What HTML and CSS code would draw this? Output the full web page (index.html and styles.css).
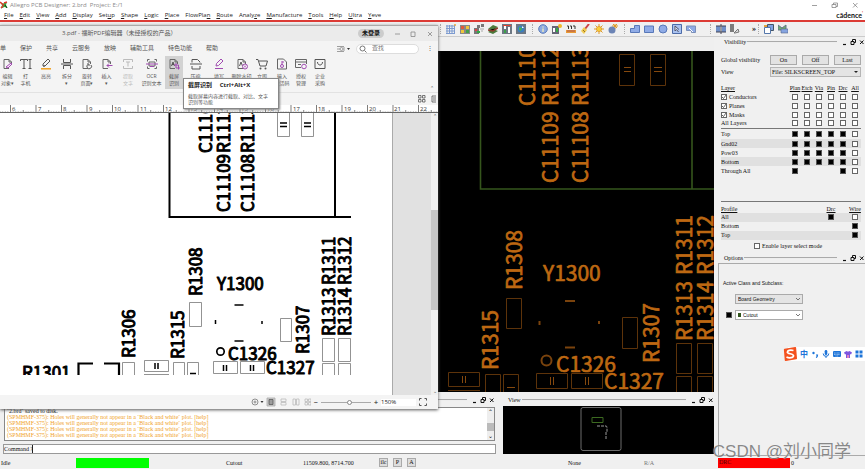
FILE: index.html
```html
<!DOCTYPE html>
<html lang="zh-CN">
<head>
<meta charset="utf-8">
<title>Allegro PCB Designer</title>
<link rel="stylesheet" href="styles.css">
</head>
<body>
<svg class="defs" aria-hidden="true">
  <symbol id="dock-icons" viewBox="0 0 24 8"><path d="M2 6.500h3" stroke="#111" stroke-width="1.200"/><path d="M11.500 3V1.500h3V4.500H13M10 3.500h3v3h-3z" fill="none" stroke="#111"/><path d="M19 2.500l3.500 3.500M22.500 2.500l-3.500 3.500" stroke="#111"/></symbol>
  <symbol id="doc" viewBox="0 0 12 12"><path d="M7 10.500H2v-9h5l2.500 2.500v2M7 1.500V4h2.500" fill="none" stroke="#666"/></symbol>
</svg>
<div class="app">
  <header class="app-head">
    <div class="app-title">
      <svg width="8" height="8" viewBox="0 0 8 8"><path d="M0 1l3 1.500L7 1 6 4l1.500 3-3-1L1 7.500 2 4z" fill="#2fae3c"/><path d="M0 1l4 3.500M4 2l3-1M1 7l2-2" stroke="#e0352b" stroke-width="1.500"/><path d="M5 4l2 3" stroke="#133b17"/></svg>
      <span>Allegro PCB Designer: 2.brd&nbsp; Project: E:/1</span>
      <svg class="win-controls" width="50" height="8" viewBox="0 0 50 8" fill="none" stroke="#777" stroke-width=".7"><path d="M1 4.500h5M22.500 3.500v-1.500h4v3.500h-1.500M21 3.500h4v3h-4zM42 2l4.500 4.500M46.500 2L42 6.500"/></svg>
    </div>
    <nav class="menu">
      <a href="#"><u>F</u>ile</a><a href="#"><u>E</u>dit</a><a href="#"><u>V</u>iew</a><a href="#"><u>A</u>dd</a><a href="#"><u>D</u>isplay</a><a href="#">Set<u>u</u>p</a><a href="#"><u>S</u>hape</a><a href="#"><u>L</u>ogic</a><a href="#"><u>P</u>lace</a><a href="#">FlowPla<u>n</u></a><a href="#"><u>R</u>oute</a><a href="#">Analy<u>z</u>e</a><a href="#"><u>M</u>anufacture</a><a href="#"><u>T</u>ools</a><a href="#"><u>H</u>elp</a><a href="#"><u>U</u>ltra</a><a href="#"><u>Y</u>eve</a>
      <strong class="brand">cādence<sup>'</sup></strong>
    </nav>
  </header>

  <div class="toolbar">
    <div class="group">
      <svg viewBox="0 0 10 10"><path d="M0 2h9M0 4.500h9M0 7h9M0 9.500h9M1 1v9M3.500 1v9M6 1v9M8.500 1v9" stroke="#7d9bd0"/><circle cx="9" cy="1" r="1" fill="#e9a13c"/></svg>
      <svg viewBox="0 0 10 10"><path fill="#888" d="M0 1h10v9H0z"/><path fill="#e05a3c" d="M1 2h3v3H1z"/><path fill="#f0c63a" d="M6 2h3v3H6zM1 6h3v3H1z"/><path fill="#44a04a" d="M6 6h3v3H6z"/></svg>
      <svg viewBox="0 0 10 10"><path fill="#777" d="M3 1h3v3H3zM7 0h3v3H7zM0 4h5v6H0z"/><path fill="#d44" d="M1 5h2v2H1z"/><path fill="#3a4" d="M3 7h3v2H3z"/><path stroke="#aaa" d="M6 5h4M7 7h2"/></svg>
      <svg viewBox="0 0 10 10"><path fill="#4b7a3c" d="M0 5l5-4 5 2-5 3zM0 8l5-3 5 2-5 3z"/><path stroke="#8d3a2a" stroke-width="1.500" d="M0 6l5 1 5-3"/></svg>
      <svg viewBox="0 0 10 10"><path fill="#6d7783" d="M0 0h10v10H0z"/><path fill="#fff" d="M2 2h2v3H2zM6 3h2v6H6z"/><path fill="#3da04a" d="M2 6h2v3H2z"/><path fill="#d43" d="M1 1h8v1H1z"/></svg>
      <svg viewBox="0 0 10 10"><path fill="#6d7783" d="M0 0h10v10H0z"/><circle cx="5" cy="5" r="3.500" fill="#3b7fc0"/><path fill="#4cb050" d="M3 3l3 1-1 3-2-1z"/><path fill="#fff" d="M6 2l2 2H6z"/></svg>
    </div>
    <div class="group">
      <svg viewBox="0 0 10 10"><circle cx="5" cy="5" r="4.300" fill="#8daae0" stroke="#5d7cb8"/><path d="M5 2.500v1M5 4.500v3.500" stroke="#e8e6c0" stroke-width="1.500"/></svg>
      <svg viewBox="0 0 10 10"><path fill="#667" d="M0 2h7v8H0z"/><path fill="#fff" d="M1 4h2v4H1z"/><path fill="#3a4" d="M4 4h2v4H4z"/><circle cx="8" cy="2" r="2" fill="#efb928"/></svg>
      <svg viewBox="0 0 10 10"><path stroke="#333" d="M1 2h1.500v3M4 2h1.500v3M7 2h2v3" fill="none"/><path fill="#e99a35" d="M0 6h10v3H0z"/><path d="M2 6v2M4 6v2M6 6v2M8 6v2" stroke="#a55"/></svg>
      <svg viewBox="0 0 10 10"><path d="M9 0L5 5" stroke="#c44" stroke-width="2"/><path fill="#f0ca52" d="M4 3l3 3-3 4-3-3z"/><path d="M3 6l2 2" stroke="#997222"/></svg>
      <svg viewBox="0 0 10 10"><path d="M5 0v10M0 5h10M1.500 1.500l7 7M8.500 1.500l-7 7" stroke="#df9a28"/><circle cx="5" cy="5" r="2.600" fill="#f8ce38" stroke="#d98a20" stroke-width=".6"/></svg>
      <svg viewBox="0 0 10 10"><path d="M7 0v5M4 2h6M5 0l4 4M9 0L5 4" stroke="#df9a28"/><circle cx="4" cy="6" r="3.500" fill="#6c84b5"/></svg>
    </div>
    <div class="group">
      <svg viewBox="0 0 10 10"><path d="M4.500 1.500h5v7h-9v-4h4z" fill="#8fabe6" stroke="#5878b8"/></svg>
      <svg viewBox="0 0 10 10"><path d="M.5 2h9v6.500h-9z" fill="#8fabe6" stroke="#5878b8"/></svg>
      <svg viewBox="0 0 10 10"><circle cx="5" cy="5" r="4" fill="#8fabe6" stroke="#5878b8"/></svg>
      <svg viewBox="0 0 10 10"><path d="M.5.5h9v9h-9z" fill="#a9c2f0" stroke="#4d6ba8"/><path d="M3 2v5l1.500-1.500L6.500 8M3 2l4 3.500" fill="#fff" stroke="#556"/></svg>
      <svg viewBox="0 0 10 10"><path d="M.5 2h9v6.500h-4v-2h-5z" fill="#8fabe6" stroke="#7b8fb8"/><path d="M3 4l4 4" stroke="#fff"/></svg>
    </div>
    <div class="group panels">
      <svg viewBox="0 0 10 10"><path fill="#6f8fc8" d="M0 2h4v6H0zM6 2h4v6H6z"/><path d="M5 0v10M0 2h10M0 8h10" stroke="#445"/></svg>
      <svg viewBox="0 0 10 10"><path d="M1 0v8M3 0v8" stroke="#555" stroke-width="1.500"/><path d="M4 9l4-4 1 3-4 1z" fill="#ddd" stroke="#777"/></svg>
      <b class="more">»</b>
    </div>
    <div class="group tail">
      <svg viewBox="0 0 10 10"><path d="M3.500.5h6v6h-6z" fill="#7ea0e0" stroke="#456"/><path d="M.5 3.500h6v6h-6z" fill="#fff" stroke="#57a"/><path d="M0 2h3" stroke="#e9a13c" stroke-width="2"/></svg>
      <svg viewBox="0 0 10 10"><path d="M0 1l4 3 4-3v5H0z" fill="#6fae70" stroke="#678"/><path d="M3 5h7v4H3z" fill="#86a4e0" stroke="#568" stroke-width=".6"/></svg>
    </div>
  </div>

  <div class="work">
    <main class="design">
      <div class="strip"></div>
      <div class="canvas">
        <svg class="fill" aria-label="PCB canvas">
          <g transform="translate(0 -51)">
            <path d="M480.500 51V189H714M692 51v138" fill="none" stroke="#35551c" stroke-width="1.600"/>
            <g class="cad-lines">
              <path d="M619.500 54.500h15v31h-15zM650.500 54.500h15v31h-15zM506.500 298.500h15v30h-15zM448.500 372.500h31v14h-31zM448 390.500h32M485.500 393v-18.500h15V393M503.500 393v-18.500h15V393M536.500 373.500h31v15h-31zM571.500 373.500h31v15h-31zM622.500 317.500h15v31h-15zM676.500 343.500h15v30h-15zM697.500 343.500h15v30h-15zM676.500 393v-16.500h15V393M697.500 393v-16.500h15V393"/>
              <path class="bright" d="M624 67.500h7M624 71.500h7M654 67.500h8M654 71.500h8M462.500 376v7M465.500 376v7M550.500 377v8M553.500 377v8M585.500 377v8M588.500 377v8M507 387.500h8"/>
              <path class="marks" d="M565 301h10M565 347.500h10M539.500 321v4M599 321v3"/>
              <circle class="marks" cx="546.500" cy="360.500" r="5"/>
            </g>
            <g class="cad-text">
              <text transform="translate(535 106) rotate(-90)">C1110</text>
              <text transform="translate(558 106) rotate(-90)">R1112</text>
              <text transform="translate(588 106) rotate(-90)">R1113</text>
              <text transform="translate(558 183) rotate(-90)">C11109</text>
              <text transform="translate(588 183) rotate(-90)">C11108</text>
              <text transform="translate(522 290) rotate(-90)">R1308</text>
              <text transform="translate(498 370) rotate(-90)">R1315</text>
              <text transform="translate(659 363) rotate(-90)">R1307</text>
              <text transform="translate(692 275) rotate(-90)">R1311</text>
              <text transform="translate(713 275) rotate(-90)">R1312</text>
              <text transform="translate(692 341) rotate(-90)">R1313</text>
              <text transform="translate(713 341) rotate(-90)">R1314</text>
              <text x="543" y="281">Y1300</text>
              <text x="556" y="372">C1326</text>
              <text x="604" y="389">C1327</text>
            </g>
          </g>
        </svg>
      </div>
      <div class="docks">
        <section class="console">
          <div class="dock-head"><i></i><svg><use href="#dock-icons"/></svg></div>
          <div class="log">
            <div class="log-text">
              <p class="plain">`2.brd` saved to disk.</p>
              <p>(SPMHMF-375): Holes will generally not appear in a `Black and white` plot. [help]</p>
              <p>(SPMHMF-375): Holes will generally not appear in a `Black and white` plot. [help]</p>
              <p>(SPMHMF-375): Holes will generally not appear in a `Black and white` plot. [help]</p>
              <p>(SPMHMF-375): Holes will generally not appear in a `Black and white` plot. [help]</p>
            </div>
            <div class="log-scroll"><span>⌃</span><b></b><span>⌄</span></div>
          </div>
          <div class="command"><label for="cmd">Command &gt;</label><input id="cmd" type="text"></div>
        </section>
        <section class="view">
          <div class="dock-head"><span>View</span><i></i><svg><use href="#dock-icons"/></svg></div>
          <div class="world">
            <svg viewBox="0 0 211 48"><rect x="78" y="1.500" width="40" height="43" rx="2" fill="none" stroke="#888" stroke-width=".8"/><path d="M89 11.500h11v5H89z" fill="none" stroke="#3c6a20"/><path d="M94 20h9q1 0 1 2v4M103 26v7" fill="none" stroke="#999" stroke-dasharray="3 1"/></svg>
          </div>
        </section>
      </div>
    </main>

    <aside class="panel">
      <div class="dock-head"><span>Visibility</span><i></i><svg><use href="#dock-icons"/></svg></div>
      <div class="vis">
        <div class="field"><span>Global visibility</span><div class="trio"><button>On</button><button>Off</button><button>Last</button></div></div>
        <div class="field"><label for="vw">View</label><select id="vw"><option>File: SILKSCREEN_TOP</option></select></div>
        <table class="layers"><thead><tr><th>Layer</th><th>Plan</th><th>Etch</th><th>Via</th><th>Pin</th><th>Drc</th><th>All</th></tr></thead><tbody id="classes"></tbody><tbody id="copper"></tbody></table>
        <table class="layers profile"><thead><tr><th>Profile</th><th></th><th></th><th></th><th>Drc</th><th></th><th>Wire</th></tr></thead><tbody id="profile"></tbody></table>
        <label class="mode"><input type="checkbox">Enable layer select mode</label>
      </div>
      <div class="dock-head"><span>Options</span><i></i><svg><use href="#dock-icons"/></svg></div>
      <div class="options">
        <p>Active Class and Subclass:</p>
        <select class="combo grey" aria-label="Active class"><option>Board Geometry</option></select>
        <div class="sub"><input type="checkbox" class="solid" checked aria-label="Subclass visible"><select class="combo swatch" aria-label="Subclass"><option>Cutout</option></select></div>
      </div>
    </aside>
  </div>

  <footer class="status">
    <span>Idle</span><span class="ok"></span><span class="cut">Cutout</span><span>11509.800, 8714.700</span>
    <span class="keys"><button>ilc</button><button>P</button><button>A</button></span><span>None</span><span class="dim">R/A</span><span class="drc">DRC</span><span class="zero">0</span>
  </footer>

  <section class="pdf">
    <header class="pdf-title">
      <span>3.pdf - 福昕PDF编辑器（未经授权的产品）</span>
      <button class="login">未登录</button>
      <svg width="44" height="8" viewBox="0 0 44 8" fill="none" stroke="#888" stroke-width=".8"><path d="M1 4h5M17 2h4v4.500h-4zM34 2l4 4M38 2l-4 4"/></svg>
    </header>
    <nav class="tabs">
      <a href="#">单</a><a href="#">保护</a><a href="#">共享</a><a href="#">云服务</a><a href="#">放映</a><a href="#">辅助工具</a><a href="#">特色功能</a><a href="#">帮助</a>
      <span class="tools"><svg width="14" height="8" viewBox="0 0 14 8"><path d="M0 1.500h7M0 4h3M0 6.500h7M7 2v4" stroke="#888" fill="none" stroke-width=".8"/><circle cx="4.500" cy="4" r="1.500" fill="none" stroke="#888" stroke-width=".8"/><path d="M10 3h3l-1.500 2z" fill="#333"/></svg>
      <label class="search"><svg width="8" height="8" viewBox="0 0 8 8"><circle cx="3.500" cy="3.500" r="2.500" fill="none" stroke="#777"/><path d="M5.500 5.500l2 2" stroke="#777"/></svg><input type="text" placeholder="查找" aria-label="查找"></label><span>⋮</span></span>
    </nav>
    <div class="ribbon">
      <button><svg viewBox="0 0 12 12"><use href="#doc"/><path d="M4 9l5-4 1 1-4 4z" fill="#f8eafa" stroke="#a04bb0"/></svg><span>编辑<br>对象▾</span></button>
      <button><svg viewBox="0 0 12 12"><path d="M.5 3V1.500h7V3M4 1.500v9M2.500 10.500h3M8.500 1.500h3M10 1.500v9M8.500 10.500h3" fill="none" stroke="#555"/></svg><span>打<br>字机</span></button>
      <button><svg viewBox="0 0 12 12"><path d="M3 8V6l5-5 2 2-5 5zM3 8h2" fill="none" stroke="#555"/><path d="M1 10.800h10" stroke="#f0a020" stroke-width="1.500"/></svg><span>高亮</span></button>
      <button><svg viewBox="0 0 12 12"><path d="M2.500 1v3.500h7V1M2.500 11V7.500h7V11M0 6h12" fill="none" stroke="#555"/></svg><span>拆分<br>▾</span></button>
      <button><svg viewBox="0 0 12 12"><use href="#doc"/><path d="M7 6.500a2.300 2.300 0 1 0 3 .5M7 5v2h2" fill="#f4f4f4" stroke="#555"/></svg><span>旋转<br>页面▾</span></button>
      <button><svg viewBox="0 0 12 12"><use href="#doc"/><path d="M11.500 7.500H6M8 5.500l-2 2 2 2" fill="none" stroke="#a04bb0"/></svg><span>插入<br>▾</span></button>
      <button disabled><svg viewBox="0 0 12 12"><path d="M1.500 4V1.500h9V4M1.500 8v2.500h9V8M4 4h4M6 4v4.500" fill="none" stroke="#bbb"/></svg><span>提取<br>文字</span></button>
      <button><svg viewBox="0 0 12 12"><path d="M1.500 3.500v-2h2M8.500 1.500h2v2M1.500 8.500v2h2M8.500 10.500h2v-2M3 4h6v4H3z" fill="none" stroke="#666"/><path d="M0 6h12M4 8.500h4" stroke="#a04bb0"/></svg><span>OCR<br>识别文本</span></button>
      <button class="on"><svg viewBox="0 0 12 12"><use href="#doc"/><path d="M3.500 8L5 4l1.500 4M4 6.500h2" fill="none" stroke="#555"/><path d="M8 5v5h4M6 7h4.500v4.500" fill="none" stroke="#a04bb0"/></svg><span>截屏<br>识别</span></button>
      <button><svg viewBox="0 0 12 12"><path d="M2 4.500v-3h5.500L10 4v.5M2 8v3h8V8M0 6h12" fill="none" stroke="#555"/></svg><span>压缩</span></button>
      <button><svg viewBox="0 0 12 12"><path d="M3 8l.5-2.500L8 1l2 2-4.500 4.500zM2 10.500h8" fill="none" stroke="#a04bb0"/></svg><span>填写</span></button>
      <button><svg viewBox="0 0 12 12"><use href="#doc"/><path d="M3.500 8L5 4l1.500 4" fill="none" stroke="#555"/><circle cx="9" cy="8.500" r="2.500" fill="#f4f4f4" stroke="#a04bb0"/><path d="M8 7.500l2 2M10 7.500l-2 2" stroke="#a04bb0" stroke-width=".7"/></svg><span>删除水印</span></button>
      <button><svg viewBox="0 0 12 12"><path d="M0 1.500h2l2 6.500h6l1.500-5H3" fill="none" stroke="#555"/><circle cx="4.500" cy="10.500" r="1" fill="#555"/><circle cx="9.500" cy="10.500" r="1" fill="#555"/></svg><span>立即<br>购买</span></button>
      <button><svg viewBox="0 0 12 12"><path d="M1.500 1h6l3 3v7h-9z" fill="none" stroke="#666"/><path d="M6 3v4M6 4h2" stroke="#a04bb0"/><circle cx="6" cy="8" r="1.500" fill="none" stroke="#a04bb0"/></svg><span>输入<br>激活码</span></button>
      <button><svg viewBox="0 0 12 12"><path d="M6 9.500H.5v-8h11V6M.5 4h11M3 6.500h3" fill="none" stroke="#666"/><circle cx="9" cy="8.500" r="2.300" fill="#f4f4f4" stroke="#a04bb0"/></svg><span>授权<br>管理</span></button>
      <button><svg viewBox="0 0 12 12"><path d="M1 1.500h10v9H1zM3.500 4c0 4 5 4 5 0" fill="none" stroke="#555"/></svg><span>企业<br>采购</span></button>
      <span class="collapse">⌃</span>
    </div>
    <div class="subbar"><svg width="18" height="8" viewBox="0 0 18 8" fill="none" stroke="#555" stroke-width=".8"><path d="M.5.500h2.500v2.500H.5zM4.500.500H7v2.500H4.500zM.5 4.500h2.500V7H.5zM4.500 4.500H7V7H4.500zM14 1h4M14 1v6h4M15 3h3M15 5h3"/></svg></div>
    <div class="ruler">
      <svg class="fill">
        <defs><pattern id="ticks" x="10" y="0" width="25.500" height="8" patternUnits="userSpaceOnUse"><path d="M.5 0v8M3 6.500V8M5.600 6.500V8M8.100 6.500V8M10.700 6.500V8M13.200 5V8M15.800 6.500V8M18.300 6.500V8M20.900 6.500V8M23.400 6.500V8" stroke="#444" stroke-width=".7"/></pattern></defs>
        <rect width="100%" height="8" fill="url(#ticks)"/>
        <text x="12" y="6">6</text><text x="38" y="6">7</text><text x="63" y="6">8</text><text x="89" y="6">9</text><text x="114" y="6">10</text><text x="140" y="6">11</text><text x="165" y="6">12</text><text x="190" y="6">13</text><text x="216" y="6">14</text><text x="241" y="6">15</text><text x="267" y="6">16</text><text x="293" y="6">17</text><text x="318" y="6">18</text><text x="344" y="6">19</text><text x="369" y="6">20</text><text x="394" y="6">21</text><text x="420" y="6">22</text>
      </svg>
    </div>
    <div class="doc">
      <div class="page">
        <svg class="fill" aria-label="PDF page">
          <g transform="translate(0 -113)">
            <path d="M169.500 113V217H351M335 113v104" fill="none" stroke="#000" stroke-width="2"/>
            <path d="M277.500 112v24.500h12V112M301.500 112v24.500h12V112M189.500 302.500h12v24h-12zM280.500 318.500h11v23h-11zM322.500 338.500h12v23h-12zM338.500 338.500h12v23h-12zM322.500 376v-12.500h12V376M338.500 376v-12.500h12V376M122.500 376v-13.500h12V376M144.500 360.500h24v11h-24zM144 374.500h25M173.500 376v-13.500h11V376M187.500 376v-13.500h11V376M213.500 361.500h24v12h-24zM240.500 361.500h24v12h-24z" fill="none" stroke="#777" stroke-width=".8"/>
            <path d="M280 123h7M280 126.500h7M304 123h7M304 126.500h7M155 363v6M158 363v6M223.500 365v6M226.500 365v6M250.500 365v6M253.500 365v6M190 373.500h6M234.500 305h9M234.500 341h9M215.500 320v4M262 321v3" stroke="#000" stroke-width="1.500"/>
            <circle cx="220.500" cy="351.500" r="3.700" fill="none" stroke="#000" stroke-width="1.700"/>
            <path d="M78.500 376V363.500H93M104 363.500h15V376" fill="none" stroke="#000" stroke-width="2.200"/>
            <g class="pdf-text">
              <text transform="translate(212 153) rotate(-90)">C1110</text>
              <text transform="translate(230 153) rotate(-90)">R1112</text>
              <text transform="translate(254 153) rotate(-90)">R1113</text>
              <text transform="translate(230 212) rotate(-90)">C11109</text>
              <text transform="translate(254 212) rotate(-90)">C11108</text>
              <text transform="translate(202 296) rotate(-90)">R1308</text>
              <text transform="translate(135 358) rotate(-90)">R1306</text>
              <text transform="translate(184 359) rotate(-90)">R1315</text>
              <text transform="translate(309 354) rotate(-90)">R1307</text>
              <text transform="translate(335 285) rotate(-90)">R1311</text>
              <text transform="translate(351 285) rotate(-90)">R1312</text>
              <text transform="translate(335 336) rotate(-90)">R1313</text>
              <text transform="translate(351 336) rotate(-90)">R1314</text>
              <text x="217" y="290">Y1300</text>
              <text x="228" y="360">C1326</text>
              <text x="266" y="374">C1327</text>
              <text x="22" y="379">R1301</text>
            </g>
            <rect y="375" width="100%" height="30" fill="#fff"/>
          </g>
        </svg>
      </div>
      <div class="doc-scroll"><span>⌃</span><b></b><span>⌄</span></div>
    </div>
    <footer class="pdf-status">
      <svg width="60" height="10" viewBox="0 0 60 10" fill="none" stroke="#777" stroke-width=".8"><circle cx="4" cy="5" r="3"/><circle cx="4" cy="5" r="1"/><path d="M9.500 4h3L11 6z" fill="#333" stroke="none"/><path d="M16 1h8v8h-8z" fill="#ccc" stroke="#aaa"/><path d="M18 2.500h4v5h-4zM18 4h4M18 6h4" stroke="#555"/><path d="M30 2h5v2.500h-5zM30 5.500h5V8h-5zM42 2h2.500v6H42zM45.500 2H48v6h-2.500zM54 2h2.500v2.500H54zM57.500 2H60v2.500h-2.500zM54 5.500h2.500V8H54zM57.500 5.500H60V8h-2.500z" stroke="#bbb"/></svg>
      <b>−</b><input type="range" value="57" aria-label="Zoom"><b>+</b><span class="pct">150%</span>
      <svg width="8" height="8" viewBox="0 0 8 8" fill="none" stroke="#555"><path d="M.5 2.500v-2h2M5.500.500h2v2M.5 5.500v2h2M5.500 7.500h2v-2"/></svg>
    </footer>
    <div class="tip"><strong>截屏识别 &nbsp; &nbsp; Ctrl+Alt+X</strong><p>截取屏幕内容进行截取、对比、文字识别等功能</p></div>
  </section>

  <div class="ime">
    <svg class="sogou" viewBox="0 0 16 16"><path d="M2 3l12-2 1 12-12 2z" fill="#f4511e" stroke="#f4511e" stroke-linejoin="round" stroke-width="2"/><path d="M12 4C8 3 5 4 5 6s7 1.500 7 4-5 3-8 1.500" fill="none" stroke="#fff" stroke-width="2"/></svg>
    <b>中</b>
    <svg viewBox="0 0 8 8"><circle cx="2.500" cy="3" r="1.200" fill="#1d74d8"/><path d="M5 5h1.500q0 2-1.500 2.500" fill="none" stroke="#1d74d8" stroke-width="1.200"/></svg>
    <svg viewBox="0 0 8 8"><rect x="2.700" y="0" width="2.600" height="5" rx="1.300" fill="#1d74d8"/><path d="M1.200 3.500a2.800 2.800 0 0 0 5.600 0M4 6.300V8" fill="none" stroke="#1d74d8"/></svg>
    <svg viewBox="0 0 8 8"><rect y="1" width="8" height="6" rx="1" fill="#1d74d8"/><path d="M1 3h6M1 4.500h6M2.500 6h3" stroke="#bcd8f8" stroke-width=".7" stroke-dasharray="1 .4"/></svg>
    <svg viewBox="0 0 8 8"><path d="M2.500 1q1.500 1.200 3 0L8 2.500 7 4.500l-1-.5v4H2V4l-1 .5-1-2z" fill="#7e57e0"/><path d="M3 5h2v3H3z" fill="#e080c0"/></svg>
    <svg viewBox="0 0 8 8"><path d="M.5.500h3v3h-3zM4.500.500h3v3h-3zM.5 4.500h3v3h-3zM4.500 4.500h3v3h-3z" fill="#1d74d8"/></svg>
  </div>
  <div class="watermark">CSDN @刘小同学</div>
</div>
<script src="script.js"></script>
</body>
</html>
```
FILE: styles.css
```css
* { box-sizing: border-box; }
body { margin: 0; background: #f0f0f0; font: 6px/8px "Liberation Serif", "Noto Sans CJK SC", serif; color: #111; }
p { margin: 0; }
button, input, select { margin: 0; padding: 0; font: inherit; color: inherit; border: 0; border-radius: 0; appearance: none; background: none; }
.defs { position: absolute; width: 0; height: 0; }
.fill { display: block; width: 100%; height: 100%; }
.app { position: relative; display: grid; grid-template-rows: 22px 15px minmax(0, 1fr) 13px; height: 100vh; overflow: hidden; }

/* application header */
.app-head { background: #fff; border-bottom: 2px solid #dc3b35; font-family: "Open Sans", sans-serif; }
.app-title { display: flex; align-items: center; gap: 2px; height: 10px; color: #8a8a8a; }
.app-title .win-controls { margin-left: auto; margin-right: 4px; }
.menu { display: flex; align-items: center; gap: 6px; height: 10px; padding-left: 4px; }
.menu a { color: #222; text-decoration: none; }
.brand { margin-left: auto; margin-right: 2px; font: bold 7px/8px Lato, sans-serif; }
.brand sup { font-size: 5px; line-height: 1px; color: #dc3b35; }

.toolbar { display: flex; align-items: center; gap: 6px; padding-left: 440px; border-bottom: 1px solid #ccc; }
.group { display: flex; align-items: center; gap: 4px; padding-left: 5px; border-left: 1px dotted #aaa; }
.group svg { width: 10px; height: 10px; }
.panels { margin-left: 8px; }
.tail { margin-left: -4px; }
.more { width: 12px; text-align: right; font-size: 8px; }

.work { display: grid; grid-template-columns: minmax(0, 1fr) 149px; min-height: 0; }
.design { display: grid; grid-template-rows: 14px minmax(0, 1fr) 64px; padding-right: 2px; min-height: 0; }
.strip { background: #efefef; }
.canvas { background: #000; overflow: hidden; }
.cad-lines path { fill: none; stroke: #5d330a; }
.cad-lines .bright { stroke: #85490e; }
.cad-lines .marks { fill: none; stroke: #7a430d; stroke-width: 2px; }
.cad-text { font: 400 21px "Noto Sans CJK JP", sans-serif; fill: #bd6812; stroke: #bd6812; stroke-width: .7px; stroke-linejoin: round; }

/* docks below the canvas */
.docks { display: grid; grid-template-columns: 495px minmax(0, 1fr); gap: 8px; }
.dock-head { display: flex; align-items: center; gap: 1px; height: 10px; }
.dock-head i { flex: 1; height: 2px; background: #aaa; border-bottom: 1px solid #eee; }
.dock-head svg { width: 24px; height: 8px; margin-left: 3px; }
.console { display: flex; flex-direction: column; padding: 3px 0 3px 4px; }
.view { display: flex; flex-direction: column; padding-top: 3px; }
.view .dock-head { padding-left: 5px; }
.world { flex: 1; margin: 1px 0 2px; background: #000; }
.world svg { display: block; width: 100%; height: 48px; }
.log { display: flex; height: 34px; margin-top: 2px; background: #fff; border: 1px solid #888; overflow: hidden; }
.log-text { flex: 1; padding: 0 2px; line-height: 6px; color: #f0a32a; }
.log-text .plain { color: #222; }
.log-scroll { display: flex; flex-direction: column; justify-content: space-between; width: 7px; background: #eee; text-align: center; }
.log-scroll b { height: 8px; margin-top: 6px; background: #bbb; }
.command { display: flex; align-items: center; height: 8px; margin-top: 4px; background: #f4f4f4; outline: 1px solid #999; }
.command label { width: 28px; white-space: nowrap; }
.command input { flex: 1; height: 8px; background: #fff; border-left: 1px solid #222; }

/* visibility and options */
.panel { min-height: 0; display: flex; flex-direction: column; }
.panel .dock-head { padding-left: 8px; }
.vis { padding: 8px 4px 0 5px; height: 206px; }
.field { display: grid; grid-template-columns: 49px 1fr; align-items: center; height: 10px; margin-bottom: 2px; }
.trio { display: grid; grid-template-columns: repeat(3, 1fr); gap: 5px; }
.field button { height: 10px; background: #e2e2e2; border: 1px solid #aaa; line-height: 8px; }
.field select { height: 10px; padding-left: 1px; border: 1px solid #b5b5b5; background: #e4e4e4 url("data:image/svg+xml,%3Csvg xmlns='http://www.w3.org/2000/svg' viewBox='0 0 4 4'%3E%3Cpath d='M0 1h4L2 3z' fill='%23222'/%3E%3C/svg%3E") no-repeat right 2px center / 4px 4px; }
.layers { width: 100%; margin-top: 7px; border-collapse: collapse; table-layout: fixed; }
.layers th { height: 8px; padding: 0; font-weight: 400; text-decoration: underline; width: 12px; }
.layers th:first-child { width: auto; text-align: left; }
.layers td { height: 9px; padding: 0; text-align: center; line-height: 8px; }
.layers td:first-child { text-align: left; }
.layers td label { display: flex; align-items: center; gap: 2px; }
.layers input, .mode input, .sub input { display: block; width: 6px; height: 6px; margin: 0 auto; background: #fff; border: 1px solid #666; }
.layers td label input, .mode input { margin: 0; }
.layers .tick { background: #fff url("data:image/svg+xml,%3Csvg xmlns='http://www.w3.org/2000/svg' viewBox='0 0 4 4'%3E%3Cpath d='M0 2l1.500 1.500L4 0' fill='none' stroke='%23222' stroke-width='.7'/%3E%3C/svg%3E"); }
.layers .solid, .sub .solid { background: #000; border-color: #555; }
#copper tr:first-child td { border-top: 1px solid #777; height: 11px; }
#copper tr:nth-child(even), #profile tr:nth-child(odd) { background: #e0e0e0; }
.profile { margin-top: 26px; border-top: 1px solid #777; }
.profile th { height: 11px; vertical-align: bottom; }
.mode { display: flex; align-items: center; gap: 2px; margin: 2px 0 0 33px; }
.options { flex: 1; margin: 0 0 0 2px; padding: 15px 4px; border: 1px solid #aaa; border-right: 0; font-family: "Liberation Sans", sans-serif; font-size: 5px; }
.combo { display: block; width: 68px; height: 10px; padding-left: 2px; border: 1px solid #aaa; background: #fff url("data:image/svg+xml,%3Csvg xmlns='http://www.w3.org/2000/svg' viewBox='0 0 6 4'%3E%3Cpath d='M1 1l2 2 2-2' fill='none' stroke='%23555' stroke-width='.8'/%3E%3C/svg%3E") no-repeat right 1px center / 6px 4px; }
.combo.grey { background-color: #e4e4e4; margin: 7px 0 6px 12px; }
.combo.swatch { padding-left: 7px; background-image: linear-gradient(#31551c, #31551c), url("data:image/svg+xml,%3Csvg xmlns='http://www.w3.org/2000/svg' viewBox='0 0 6 4'%3E%3Cpath d='M1 1l2 2 2-2' fill='none' stroke='%23555' stroke-width='.8'/%3E%3C/svg%3E"); background-position: left 2px center, right 1px center; background-size: 3px 4px, 6px 4px; }
.sub { display: flex; align-items: center; gap: 3px; padding-left: 3px; }
.sub input { margin: 0; }

.status { display: grid; grid-template-columns: 76px 73px 1fr 76px 189px 76px 75px 72px 75px; align-items: center; background: #f0f0f0; }
.status > span { padding-left: 1px; }
.status .ok { height: 10px; background: #0f0; }
.status .cut { padding-left: 77px; }
.status .keys { display: flex; gap: 5px; }
.keys button { width: 9px; height: 9px; background: #ddd; border: 1px solid #aaa; line-height: 7px; }
.status .dim { color: #777; }
.status .drc { height: 10px; background: #f00; color: #500; }

/* PDF editor window lying over the design canvas */
.pdf { position: absolute; left: 0; top: 25px; bottom: 60px; width: 438px; display: grid; grid-template-rows: 15px 15px 37px 12px 8px minmax(0, 1fr) 14px; background: #f4f4f4; border-top: 1px solid #aaa; box-shadow: 0 1px 3px #555; font: 5px/7px "Open Sans", "Noto Sans CJK SC", sans-serif; color: #555; }
.pdf-title { display: flex; align-items: center; background: #ebebeb; padding-left: 62px; font-size: 6px; }
.login { width: 26px; height: 9px; margin-left: auto; margin-right: 10px; border-radius: 5px; background: #ccc; color: #111; font-weight: 700; }
.tabs { display: flex; align-items: center; gap: 14px; font-size: 6px; }
.tabs a { color: #555; text-decoration: none; }
.tools { display: flex; align-items: center; gap: 5px; margin-left: auto; margin-right: 5px; }
.search { display: flex; align-items: center; gap: 5px; width: 63px; height: 10px; padding-left: 2px; margin-right: 3px; border: 1px solid #ddd; border-radius: 5px; background: #fff; }
.search input { width: 40px; }
.ribbon { display: grid; grid-template-columns: 15px 21px 20px 22px 18px 21px 22px 25px 20px 23px 24px 21px 20px 20px 18px 20px 1fr; border-bottom: 1px solid #e2e2e2; }
.ribbon button { display: flex; flex-direction: column; align-items: center; gap: 3px; justify-self: center; align-self: start; width: 100%; height: 33px; padding-top: 2px; white-space: nowrap; }
.ribbon button svg { flex: none; width: 12px; height: 12px; }
.ribbon button:disabled { color: #bbb; }
.ribbon .on { width: 18px; background: #d2d2d2; }
.collapse { justify-self: end; align-self: end; margin-right: 4px; }
.subbar { display: flex; align-items: center; justify-content: flex-end; padding-right: 2px; }
.ruler { background: #fff; border-bottom: 1px solid #666; overflow: hidden; }
.ruler text { font-size: 6px; fill: #333; }
.doc { display: grid; grid-template-columns: minmax(0, 1fr) 7px; background: #e1e1e1; min-height: 0; }
.page { margin-right: 38px; background: #fff; border-right: 1px solid #aaa; overflow: hidden; }
.pdf-text { font: 400 17px "Noto Sans CJK JP", sans-serif; fill: #000; stroke: #000; stroke-width: 1px; stroke-linejoin: round; }
.doc-scroll { display: flex; flex-direction: column; background: #f0f0f0; text-align: center; }
.doc-scroll b { height: 100px; margin: auto 0 78px; background: #c8c8c8; }
.pdf-status { display: flex; align-items: center; gap: 3px; justify-content: flex-end; padding-right: 11px; }
.pdf-status input { width: 50px; height: 6px; background: linear-gradient(#aaa, #aaa) no-repeat center / 100% 1px; }
.pdf-status input::-webkit-slider-thumb { appearance: none; width: 5px; height: 5px; border: 1px solid #888; border-radius: 50%; background: #fff; }
.pdf-status b { font-size: 7px; }
.pct { width: 35px; background: #fff; font-size: 6px; color: #222; }
.tip { position: absolute; left: 183px; top: 52px; width: 96px; height: 31px; padding: 3px 8px 3px 4px; background: #fff; border: 1px solid #888; box-shadow: 1px 1px 2px #888; line-height: 6px; }
.tip strong { display: block; margin-bottom: 4px; color: #222; font-size: 6px; line-height: 7px; white-space: nowrap; }

.ime { position: absolute; right: 0; top: 347px; display: flex; align-items: center; gap: 3px; height: 14px; padding: 0 2px 0 0; background: #fff; }
.ime svg { width: 8px; height: 8px; }
.ime b { font: bold 8px/14px "Noto Sans CJK SC", sans-serif; color: #1d74d8; }
.ime .sogou { width: 14px; height: 14px; margin-left: -5px; }
.watermark { position: absolute; right: 14px; bottom: 6px; font: 17px/22px "Liberation Sans", "Noto Sans CJK SC", sans-serif; color: #777; text-shadow: 0 0 1px #fff; opacity: .85; white-space: nowrap; }
```
FILE: script.js
```js
// Column states: "x" filled, "o" empty, "." no box.
function addRows(id, rows, tickable) {
  const body = document.getElementById(id);
  for (const [name, cells] of rows) {
    const tr = body.insertRow();
    const head = tr.insertCell();
    if (tickable && name !== "All Layers") {
      head.innerHTML = `<label><input type="checkbox" class="tick" checked>${name}</label>`;
    } else {
      head.textContent = name;
    }
    [...cells].forEach((state, i) => {
      const td = tr.insertCell();
      if (state === ".") return;
      const box = document.createElement("input");
      box.type = "checkbox";
      box.checked = state === "x";
      if (box.checked) box.className = "solid";
      box.setAttribute("aria-label", `${name} ${i + 1}`);
      td.append(box);
    });
  }
}
addRows("classes", [["Conductors", "oooooo"], ["Planes", "oooooo"], ["Masks", "oooooo"], ["All Layers", "oooooo"]], true);
addRows("copper", [["Top", "xxxxxo"], ["Gnd02", "xxxxxo"], ["Pow03", "xxxxxo"], ["Bottom", "xxxxxo"], ["Through All", "x...xo"]]);
addRows("profile", [["All", "...x.o"], ["Bottom", ".....x"], ["Top", ".....x"]]);
```
